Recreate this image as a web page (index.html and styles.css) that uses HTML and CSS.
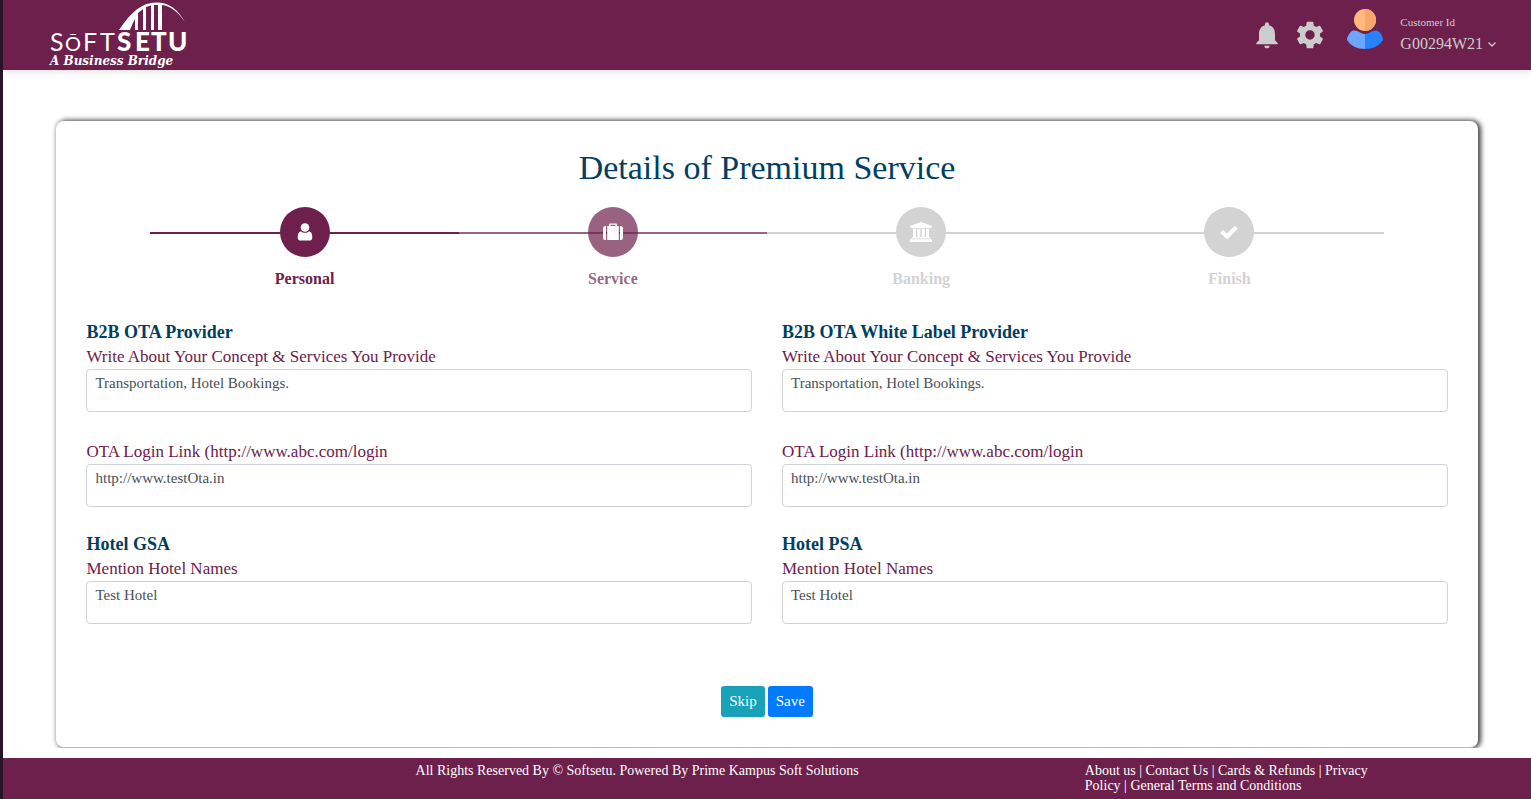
FILE: index.html
```html
<!DOCTYPE html>
<html lang="en">
<head>
<meta charset="utf-8">
<title>Softsetu - Details of Premium Service</title>
<link rel="stylesheet" href="styles.css">
</head>
<body>
<header class="topbar">
  <a class="logo" href="#" aria-label="Softsetu, A Business Bridge">
    <svg width="142" height="70" viewBox="0 0 142 70">
      <path class="logo-fill" d="M70 30C82 12 93 2.500 107 2.500C121 2.500 129 10 136 22C129 12 122 6 113 5V30H109V5H105V30H102V5.500L97 7V30H94V9L89 13V30H86V19Q83 24 81 30Z"/>
      <g class="logo-light">
        <text x="1" y="51">S</text>
        <text class="logo-round" x="16" y="51">Ō</text>
        <text x="34" y="51">F</text>
        <text x="51" y="51">T</text>
      </g>
      <g class="logo-heavy">
        <text x="68" y="51">S</text>
        <text x="86" y="51">E</text>
        <text x="102" y="51">T</text>
        <text x="119" y="51">U</text>
      </g>
      <text class="logo-tag" x="1" y="65">A Business Bridge</text>
    </svg>
  </a>
  <div class="account">
    <button class="icon-btn" type="button" aria-label="Notifications">
      <svg width="32" height="32" viewBox="0 0 24 24"><path d="M12 22c1.100 0 2-.9 2-2h-4c0 1.100.89 2 2 2zm6-6v-5c0-3.070-1.640-5.640-4.500-6.320V4c0-.83-.67-1.500-1.500-1.500s-1.500.67-1.500 1.500v.68C7.630 5.360 6 7.920 6 11v5l-2 2v1h16v-1l-2-2z"/></svg>
    </button>
    <button class="icon-btn" type="button" aria-label="Settings">
      <svg width="32" height="32" viewBox="0 0 24 24"><path d="M19.430 12.980c.04-.32.070-.64.070-.98s-.03-.66-.07-.98l2.110-1.650c.19-.15.240-.42.120-.64l-2-3.460c-.12-.22-.39-.3-.61-.22l-2.490 1c-.52-.4-1.080-.73-1.690-.98l-.38-2.650C14.460 2.180 14.250 2 14 2h-4c-.25 0-.46.180-.49.420l-.38 2.650c-.61.250-1.170.590-1.690.980l-2.490-1c-.23-.09-.49 0-.61.220l-2 3.460c-.13.220-.07.490.120.640l2.110 1.650c-.04.320-.07.650-.07.980s.03.660.070.980l-2.110 1.650c-.19.150-.24.420-.12.640l2 3.460c.12.220.39.300.61.220l2.490-1c.52.400 1.080.730 1.690.980l.38 2.650c.03.240.24.420.49.420h4c.25 0 .46-.18.490-.42l.38-2.650c.61-.25 1.170-.59 1.690-.98l2.490 1c.23.090.49 0 .61-.22l2-3.460c.12-.22.070-.49-.12-.64l-2.110-1.650zM12 15.500c-1.930 0-3.500-1.570-3.500-3.500s1.570-3.500 3.500-3.500 3.500 1.570 3.500 3.500-1.570 3.500-3.500 3.500z"/></svg>
    </button>
    <svg class="avatar" width="37" height="41" viewBox="0 0 37 41" aria-hidden="true">
      <circle cx="18" cy="11" r="11" fill="#ffb980"/>
      <path d="M18 0a11 11 0 0 1 0 22z" fill="#f5a76c"/>
      <path d="M18 25C13 25 10 20 5 22C2 24 0 28 0 31C4 37 10 40 18 40Z" fill="#6ba7ff"/>
      <path d="M18 25C23 25 26 20 31 22C34 24 36 28 36 31C32 37 26 40 18 40Z" fill="#2682ff"/>
    </svg>
    <button class="customer" type="button">
      <span class="customer-label">Customer Id</span>
      <span class="customer-id">G00294W21
        <svg width="10" height="10" viewBox="0 0 10 10"><path d="M1.500 3.500L5 7L8.500 3.500" fill="none" stroke="currentColor" stroke-width="1.300"/></svg>
      </span>
    </button>
  </div>
</header>

<main class="content">
  <form class="card">
    <h1 class="title">Details of Premium Service</h1>
    <ol class="steps">
      <li class="step step-done">
        <span class="dot"><svg width="16" height="18" viewBox="0 0 16 18"><circle cx="8" cy="4.500" r="4.300"/><path d="M4 8.200C5 9.200 6.400 9.800 8 9.800S11 9.200 12 8.200C14.500 8.600 15.300 11 15.300 14.500C15.300 16.500 14.200 17.600 12.600 17.600H3.400C1.800 17.600.7 16.500.7 14.500C.7 11 1.500 8.600 4 8.200Z"/></svg></span>
        <span class="step-name">Personal</span>
      </li>
      <li class="step step-current">
        <span class="dot"><svg width="20" height="18" viewBox="0 0 20 18"><path d="M0 5.500Q0 3 2.500 3H3V17H2.500Q0 17 0 14.500ZM17 3H17.500Q20 3 20 5.500V14.500Q20 17 17.500 17H17ZM4.200 3H6V1.500Q6 .5 7 .5H13Q14 .5 14 1.500V3H15.800V17H4.200ZM7.500 3H12.500V1.800H7.500Z" fill-rule="evenodd"/></svg></span>
        <span class="step-name">Service</span>
      </li>
      <li class="step">
        <span class="dot"><svg width="22" height="20" viewBox="0 0 22 20"><path d="M11 0L22 4V5.500H20.500Q20.500 6.200 19.700 6.200H2.300Q1.500 6.200 1.500 5.500H0V4ZM3 7H6V15H7.300V7H10.300V15H11.700V7H14.700V15H16V7H19V15H19.700Q20.500 15 20.500 16.500H1.500Q1.500 15 2.300 15H3ZM.8 17.300H21.200Q22 17.300 22 18V20H0V18Q0 17.300.8 17.300Z"/></svg></span>
        <span class="step-name">Banking</span>
      </li>
      <li class="step">
        <span class="dot"><svg width="20" height="18" viewBox="0 0 20 18"><path d="M2.500 8.500L8 13.500L17.500 4" fill="none" stroke="#fff" stroke-width="4.200"/></svg></span>
        <span class="step-name">Finish</span>
      </li>
    </ol>

    <div class="fields">
      <section class="group">
        <h2 class="group-title">B2B OTA Provider</h2>
        <label class="label" for="ota-about">Write About Your Concept &amp; Services You Provide</label>
        <textarea class="box" id="ota-about">Transportation, Hotel Bookings.</textarea>
        <label class="label label-next" for="ota-link">OTA Login Link (http://www.abc.com/login</label>
        <textarea class="box" id="ota-link">http://www.testOta.in</textarea>
      </section>
      <section class="group">
        <h2 class="group-title">B2B OTA White Label Provider</h2>
        <label class="label" for="white-about">Write About Your Concept &amp; Services You Provide</label>
        <textarea class="box" id="white-about">Transportation, Hotel Bookings.</textarea>
        <label class="label label-next" for="white-link">OTA Login Link (http://www.abc.com/login</label>
        <textarea class="box" id="white-link">http://www.testOta.in</textarea>
      </section>
      <section class="group">
        <h2 class="group-title">Hotel GSA</h2>
        <label class="label" for="gsa">Mention Hotel Names</label>
        <textarea class="box" id="gsa">Test Hotel</textarea>
      </section>
      <section class="group">
        <h2 class="group-title">Hotel PSA</h2>
        <label class="label" for="psa">Mention Hotel Names</label>
        <textarea class="box" id="psa">Test Hotel</textarea>
      </section>
    </div>

    <div class="actions">
      <button class="btn btn-skip" type="button">Skip</button>
      <button class="btn btn-save" type="submit">Save</button>
    </div>
  </form>
</main>

<footer class="footer">
  <p class="copyright">All Rights Reserved By © Softsetu. Powered By Prime Kampus Soft Solutions</p>
  <nav class="links"><a href="#">About us</a> | <a href="#">Contact Us</a> | <a href="#">Cards &amp; Refunds</a> | <a href="#">Privacy Policy</a> | <a href="#">General Terms and Conditions</a></nav>
</footer>
</body>
</html>
```
FILE: styles.css
```css
:root {
  --plum: #6d204c;
  --plum-soft: rgba(109, 32, 76, 0.7);
  --navy: #003f63;
  --muted: #d3d3d3;
}

* {
  box-sizing: border-box;
}

body {
  margin: 0;
  min-height: 100vh;
  display: flex;
  flex-direction: column;
  border-left: 3px solid #29142a;
  background: #fff;
  font-family: "Source Serif Pro", "Liberation Serif", serif;
}

button {
  margin: 0;
  border: 0;
  font-family: inherit;
  cursor: pointer;
}

.topbar {
  position: relative;
  display: flex;
  justify-content: space-between;
  height: 70px;
  padding: 0 34px 0 46px;
  background: var(--plum);
  box-shadow: 0 2px 6px rgba(0, 0, 0, 0.12);
}

.logo svg {
  display: block;
  overflow: visible;
}

.logo-fill,
.logo text {
  fill: #fff;
}

.logo-light {
  font: 400 25px Lato, sans-serif;
}

.logo-round {
  font-size: 20px;
}

.logo-heavy {
  font: 900 26px Lato, sans-serif;
}

.logo-tag {
  font: italic bold 12px "DejaVu Serif", serif;
}

.account {
  display: flex;
  align-items: center;
  gap: 11px;
}

.icon-btn {
  padding: 0;
  background: none;
}

.icon-btn svg {
  display: block;
  fill: #ccc;
}

.avatar {
  margin: 0 5px 12px 10px;
}

.customer {
  display: flex;
  flex-direction: column;
  gap: 4px;
  padding: 0 0 3px;
  background: none;
  color: #ccc;
  text-align: left;
}

.customer-label {
  font-size: 11px;
  line-height: 16px;
}

.customer-id {
  display: flex;
  align-items: center;
  gap: 4px;
  font-size: 16px;
  line-height: 20px;
}

.content {
  padding-top: 51px;
  overflow: hidden;
}

.card {
  width: 93%;
  margin: 0 auto;
  padding: 28px 30px 30px;
  border-bottom: 1px solid #bbb;
  border-radius: 8px;
  background: #fff;
  box-shadow: 2px 0 5px 1px #444;
}

.title {
  margin: 0 0 20px;
  color: var(--navy);
  font-size: 34px;
  font-weight: 400;
  line-height: 38px;
  text-align: center;
}

.steps {
  display: grid;
  grid-template-columns: repeat(4, 1fr);
  margin: 0 64px 32px;
  padding: 0;
  list-style: none;
}

.step {
  display: flex;
  flex-direction: column;
  align-items: center;
  gap: 12px;
  background: linear-gradient(var(--line, var(--muted)) 0 0) 0 25px / 100% 2px no-repeat;
  color: var(--muted);
}

.step-done {
  --line: var(--plum);
  color: var(--plum);
}

.step-current {
  --line: var(--plum-soft);
  color: var(--plum-soft);
}

.dot {
  display: grid;
  place-items: center;
  width: 50px;
  height: 50px;
  border-radius: 50%;
  background: currentColor;
}

.dot svg {
  fill: #fff;
}

.step-name {
  font-size: 16px;
  font-weight: 700;
  line-height: 20px;
}

.fields {
  display: grid;
  grid-template-columns: 1fr 1fr;
  gap: 26px 30px;
}

.group {
  display: flex;
  flex-direction: column;
}

.group-title {
  margin: 0;
  color: var(--navy);
  font-size: 18px;
  font-weight: 700;
  line-height: 23px;
}

.label {
  color: var(--plum);
  font-size: 17px;
  line-height: 25px;
}

.label-next {
  margin-top: 27px;
}

.box {
  height: 43px;
  padding: 3px 8px;
  border: 1px solid #ced4da;
  border-radius: 4px;
  color: #495057;
  font-family: inherit;
  font-size: 15px;
  line-height: 20px;
  resize: none;
}

.actions {
  display: flex;
  justify-content: center;
  gap: 3px;
  margin-top: 62px;
}

.btn {
  height: 31px;
  padding: 0 8px 2px;
  border-radius: 3px;
  color: #fff;
  font-size: 15px;
  line-height: 20px;
}

.btn-skip {
  background: #17a2b8;
}

.btn-save {
  background: #007bff;
}

.footer {
  flex: 1;
  display: grid;
  grid-template-columns: 60% 27%;
  padding: 5px 0 6px 27%;
  margin-top: 10px;
  background: var(--plum);
  color: #fff;
  font-size: 14px;
  line-height: 15px;
}

.copyright {
  margin: 0;
}

.links a {
  color: inherit;
  text-decoration: none;
}
```
